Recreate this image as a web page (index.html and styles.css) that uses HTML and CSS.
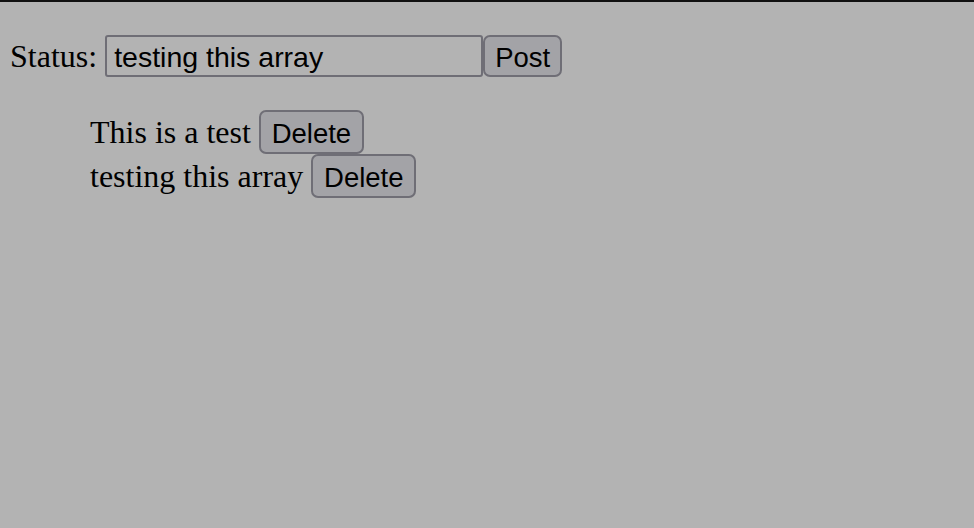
FILE: index.html
```html
<!DOCTYPE html>
<html>
<head>
<meta charset="utf-8">
<link rel="stylesheet" href="styles.css">
</head>
<body>
<div class="topbar"></div>
<main class="page">
  <form class="status-form">
    <label class="status-label" for="status">Status:</label>
    <input id="status" class="status-input" type="text" value="testing this array">
    <button type="button" class="btn btn-post">Post</button>
  </form>
  <ul class="posts">
    <li class="post"><span>This is a test</span><button type="button" class="btn btn-delete">Delete</button></li>
    <li class="post"><span>testing this array</span><button type="button" class="btn btn-delete">Delete</button></li>
  </ul>
</main>
</body>
</html>
```
FILE: styles.css
```css
html, body {
  margin: 0;
  padding: 0;
  background: #b3b3b3;
  height: 100%;
}
body {
  font-family: "Liberation Serif", "Times New Roman", serif;
  font-size: 32px;
  color: #000;
}
.topbar {
  height: 2px;
  background: #111;
}
.page {
  padding: 33px 0 0 10px;
}
.status-form {
  display: flex;
  align-items: center;
  height: 42px;
}
.status-label {
  margin-right: 8px;
}
.status-input {
  box-sizing: border-box;
  width: 378px;
  height: 42px;
  margin: 0;
  padding: 3px 7px 0;
  border: 2px solid #6f6e76;
  border-radius: 3px;
  background: #b3b3b3;
  font-family: "Liberation Sans", Arial, sans-serif;
  font-size: 28.5px;
  color: #000;
  outline: none;
}
.btn {
  box-sizing: border-box;
  margin: 0;
  border: 2px solid #6f6e76;
  border-radius: 7px;
  background: #a3a3a7;
  font-family: "Liberation Sans", Arial, sans-serif;
  font-size: 27.5px;
  color: #000;
  padding: 3px 10px 0;
  line-height: 1;
}
.btn-post {
  height: 42px;
  width: 79px;
}
.btn-delete {
  height: 44px;
  width: 105px;
}
.posts {
  list-style: none;
  margin: 33px 0 0 0;
  padding: 0 0 0 80px;
}
.post {
  display: flex;
  align-items: center;
  gap: 8px;
  height: 44px;
}
```
